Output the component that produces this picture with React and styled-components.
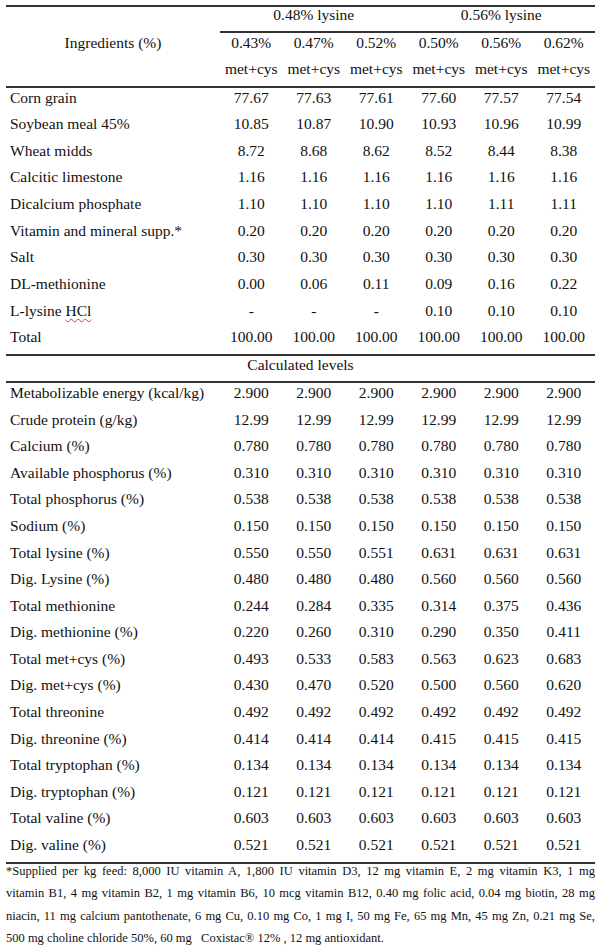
import React from "react";
import styled, { createGlobalStyle } from "styled-components";

const GlobalStyle = createGlobalStyle`
  body {
    margin: 0;
    background: #fff;
    font-family: "Liberation Serif", "Times New Roman", serif;
    color: #111;
  }
`;

const Page = styled.div`
  width: 600px;
  padding: 5px 5px 0 6px;
  box-sizing: border-box;
`;

const Grid = styled.div`
  display: grid;
  grid-template-columns: 214px repeat(6, 62.5px);
  grid-template-rows: ${(p) => p.$rows || "none"};
  grid-auto-rows: ${(p) => p.$row}px;
  border-top: ${(p) => (p.$top ? "2px solid #333" : "none")};
  border-bottom: 2px solid #333;
  font-size: 15.5px;
`;

const Cell = styled.div`
  display: flex;
  align-items: center;
  justify-content: ${(p) => (p.$left ? "flex-start" : "center")};
  padding: 0 0 8px ${(p) => (p.$left ? "4px" : "0")};
  grid-column: ${(p) => (p.$span ? `span ${p.$span}` : "auto")};
  border-bottom: ${(p) => (p.$rule ? "2px solid #333" : "none")};
  white-space: nowrap;
  line-height: 1;
`;

const Squiggle = styled.span`
  text-decoration: underline wavy #d33;
  text-decoration-thickness: 1px;
  text-underline-offset: 2px;
`;

const SectionTitle = styled.div`
  height: 27px;
  display: flex;
  align-items: center;
  justify-content: center;
  padding-bottom: 8px;
  box-sizing: border-box;
  font-size: 15.5px;
  border-bottom: 2px solid #333;
`;

const Note = styled.div`
  font-size: 12.5px;
  padding-top: 1px;
`;

const NoteLine = styled.div`
  height: 22.4px;
  line-height: 1;
  text-align: justify;
  text-align-last: ${(p) => (p.$last ? "left" : "justify")};
  white-space: pre-wrap;
`;

const groups = [
  { name: "0.48% lysine", levels: ["0.43%", "0.47%", "0.52%"] },
  { name: "0.56% lysine", levels: ["0.50%", "0.56%", "0.62%"] },
];

const ingredients = [
  ["Corn grain", "77.67", "77.63", "77.61", "77.60", "77.57", "77.54"],
  ["Soybean meal 45%", "10.85", "10.87", "10.90", "10.93", "10.96", "10.99"],
  ["Wheat midds", "8.72", "8.68", "8.62", "8.52", "8.44", "8.38"],
  ["Calcitic limestone", "1.16", "1.16", "1.16", "1.16", "1.16", "1.16"],
  ["Dicalcium phosphate", "1.10", "1.10", "1.10", "1.10", "1.11", "1.11"],
  ["Vitamin and mineral supp.*", "0.20", "0.20", "0.20", "0.20", "0.20", "0.20"],
  ["Salt", "0.30", "0.30", "0.30", "0.30", "0.30", "0.30"],
  ["DL-methionine", "0.00", "0.06", "0.11", "0.09", "0.16", "0.22"],
  ["L-lysine HCl", "-", "-", "-", "0.10", "0.10", "0.10"],
  ["Total", "100.00", "100.00", "100.00", "100.00", "100.00", "100.00"],
];

const levels = [
  ["Metabolizable energy (kcal/kg)", "2.900", "2.900", "2.900", "2.900", "2.900", "2.900"],
  ["Crude protein (g/kg)", "12.99", "12.99", "12.99", "12.99", "12.99", "12.99"],
  ["Calcium (%)", "0.780", "0.780", "0.780", "0.780", "0.780", "0.780"],
  ["Available phosphorus (%)", "0.310", "0.310", "0.310", "0.310", "0.310", "0.310"],
  ["Total phosphorus (%)", "0.538", "0.538", "0.538", "0.538", "0.538", "0.538"],
  ["Sodium (%)", "0.150", "0.150", "0.150", "0.150", "0.150", "0.150"],
  ["Total lysine (%)", "0.550", "0.550", "0.551", "0.631", "0.631", "0.631"],
  ["Dig. Lysine (%)", "0.480", "0.480", "0.480", "0.560", "0.560", "0.560"],
  ["Total methionine", "0.244", "0.284", "0.335", "0.314", "0.375", "0.436"],
  ["Dig. methionine (%)", "0.220", "0.260", "0.310", "0.290", "0.350", "0.411"],
  ["Total met+cys (%)", "0.493", "0.533", "0.583", "0.563", "0.623", "0.683"],
  ["Dig. met+cys (%)", "0.430", "0.470", "0.520", "0.500", "0.560", "0.620"],
  ["Total threonine", "0.492", "0.492", "0.492", "0.492", "0.492", "0.492"],
  ["Dig. threonine (%)", "0.414", "0.414", "0.414", "0.415", "0.415", "0.415"],
  ["Total tryptophan (%)", "0.134", "0.134", "0.134", "0.134", "0.134", "0.134"],
  ["Dig. tryptophan (%)", "0.121", "0.121", "0.121", "0.121", "0.121", "0.121"],
  ["Total valine (%)", "0.603", "0.603", "0.603", "0.603", "0.603", "0.603"],
  ["Dig. valine (%)", "0.521", "0.521", "0.521", "0.521", "0.521", "0.521"],
];

const noteLines = [
  "*Supplied per kg feed: 8,000 IU vitamin A, 1,800 IU vitamin D3, 12 mg vitamin E, 2 mg vitamin K3, 1 mg",
  "vitamin B1, 4 mg vitamin B2, 1 mg vitamin B6, 10 mcg vitamin B12, 0.40 mg folic acid, 0.04 mg biotin, 28 mg",
  "niacin, 11 mg calcium pantothenate, 6 mg Cu, 0.10 mg Co, 1 mg I, 50 mg Fe, 65 mg Mn, 45 mg Zn, 0.21 mg Se,",
  "500 mg choline chloride 50%, 60 mg   Coxistac\u00ae 12% , 12 mg antioxidant.",
];

function label(name) {
  if (name === "L-lysine HCl") {
    return (
      <span>
        L-lysine <Squiggle>HCl</Squiggle>
      </span>
    );
  }
  return name;
}

function Rows({ data }) {
  return data.map((row) =>
    row.map((v, i) => (
      <Cell key={row[0] + i} $left={i === 0}>
        {i === 0 ? label(v) : v}
      </Cell>
    ))
  );
}

export default function App() {
  return (
    <Page>
      <GlobalStyle />
      <Grid $rows="26px 26.5px 26.5px" $top>
        <Cell />
        {groups.map((g) => (
          <Cell key={g.name} $span={3} $rule>
            {g.name}
          </Cell>
        ))}
        <Cell>Ingredients (%)</Cell>
        {groups.flatMap((g) => g.levels).map((l) => (
          <Cell key={l}>{l}</Cell>
        ))}
        <Cell />
        {[0, 1, 2, 3, 4, 5].map((i) => (
          <Cell key={i}>met+cys</Cell>
        ))}
      </Grid>
      <Grid $row={26.65}>
        <Rows data={ingredients} />
      </Grid>
      <SectionTitle>Calculated levels</SectionTitle>
      <Grid $row={26.6}>
        <Rows data={levels} />
      </Grid>
      <Note>
        {noteLines.map((t, i) => (
          <NoteLine key={i} $last={i === noteLines.length - 1}>
            {t}
          </NoteLine>
        ))}
      </Note>
    </Page>
  );
}
